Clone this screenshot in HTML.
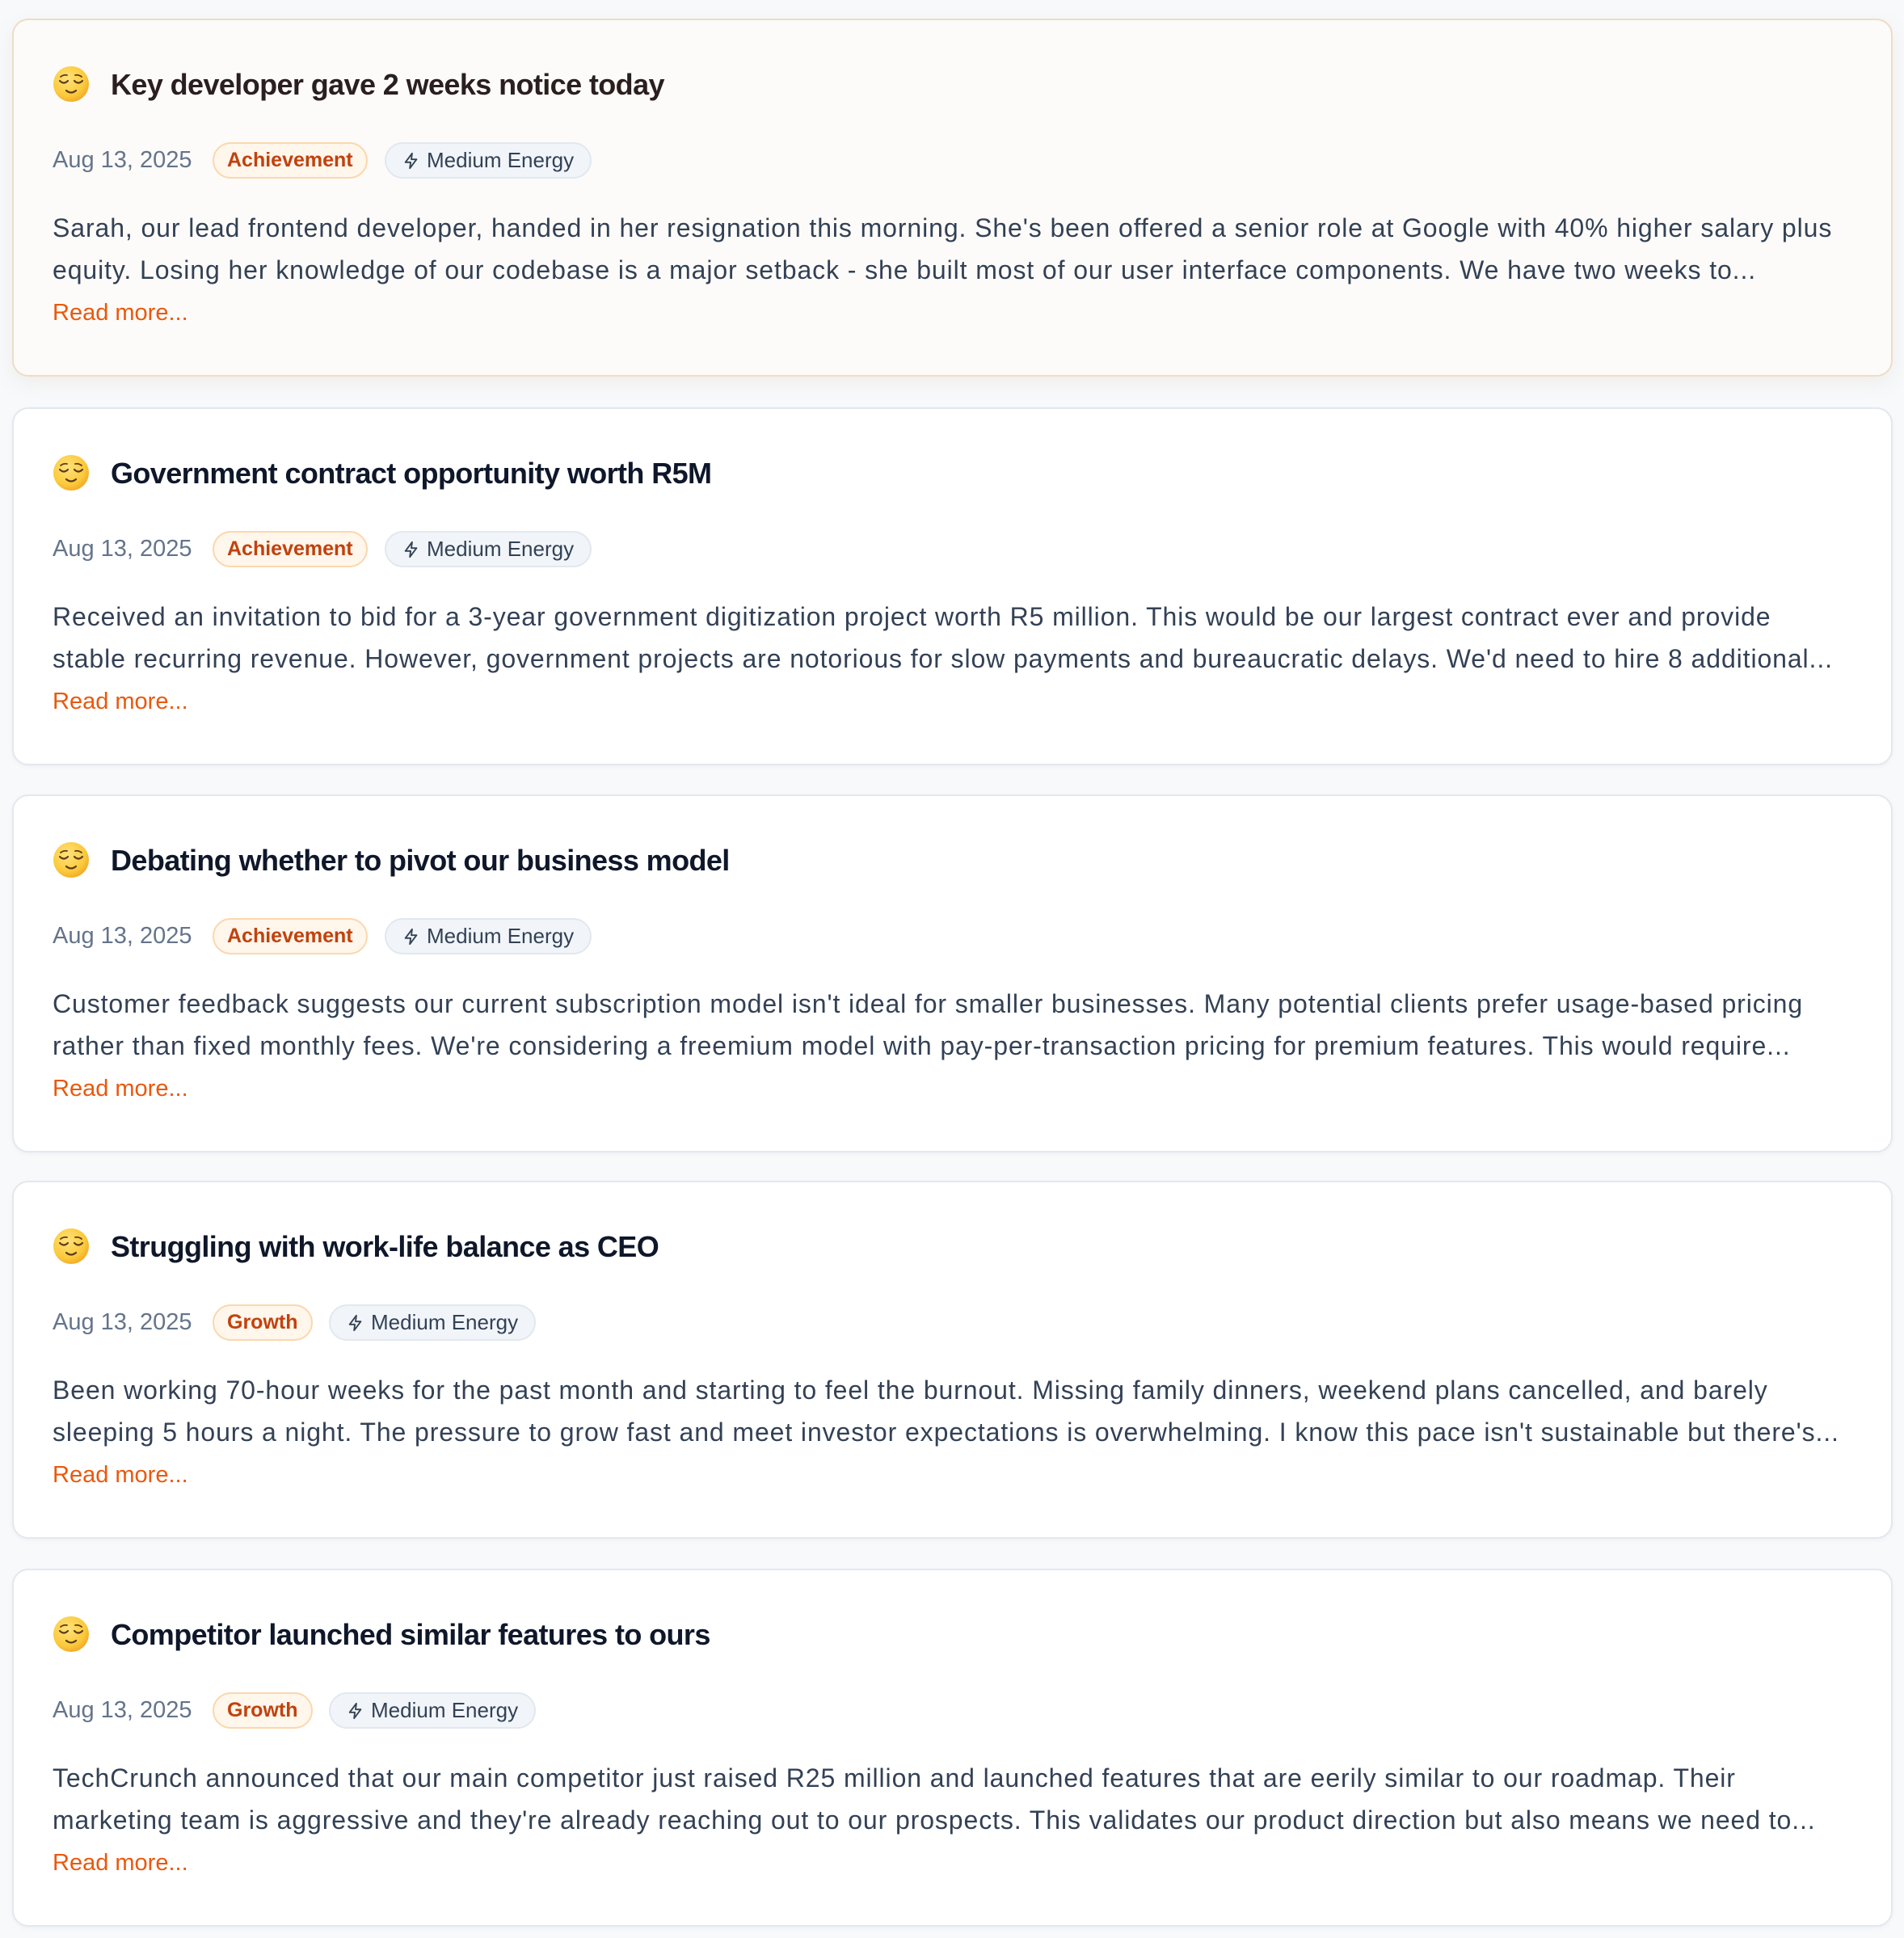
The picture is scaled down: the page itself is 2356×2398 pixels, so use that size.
<!DOCTYPE html>
<html><head><meta charset="utf-8"><style>
*{margin:0;padding:0;box-sizing:border-box}
body{width:2356px;height:2398px;background:#f7f9fb;font-family:"Liberation Sans",sans-serif;position:relative;overflow:hidden}
.card{position:absolute;left:15px;width:2327px;height:443px;background:#fff;border:2px solid #e3e8ef;border-radius:20px;box-shadow:0 2px 6px rgba(15,23,42,.04)}
.card.hl{background:#fcfbf9;border-color:#efdcc4;box-shadow:0 8px 24px rgba(180,140,90,.10)}
.emo{position:absolute;left:48px;top:56px;width:46px;height:46px}
.title{position:absolute;left:120px;top:58px;font-size:36px;font-weight:bold;color:#0f172a;letter-spacing:-0.6px;white-space:nowrap;line-height:44px}
.hl .title{color:#2a1f1f}
.date{position:absolute;left:48px;top:155px;font-size:29px;color:#64748b;line-height:36px;white-space:nowrap}
.pill{position:absolute;top:151px;height:45px;border-radius:24px;font-size:25px;line-height:41px;white-space:nowrap;padding:0 16px}
.cat{background:#fff6ec;border:2px solid #fbd8ad;color:#c2410c;font-weight:bold}
.en{background:#f1f5f9;border:2px solid #e2e8f0;color:#334155;padding-left:50px;font-size:26px;padding-right:20px}
.en svg{position:absolute;left:20px;top:10px}
.body{position:absolute;left:48px;top:231px;font-size:32px;letter-spacing:0.9px;line-height:52px;color:#334155;white-space:nowrap}
.more{position:absolute;left:48px;top:344px;font-size:29px;color:#ea580c;line-height:36px}
</style></head><body>

<svg width="0" height="0" style="position:absolute"><defs>
<symbol id="face" viewBox="0 0 46 46"><defs><radialGradient id="g" cx="40%" cy="35%" r="70%"><stop offset="0" stop-color="#ffe27a"/><stop offset="0.7" stop-color="#fbc93a"/><stop offset="1" stop-color="#f2a623"/></radialGradient></defs><circle cx="23" cy="23" r="22" fill="url(#g)"/><path d="M9 19q5 5 10 0M27 19q5 5 10 0" stroke="#5b3a1a" stroke-width="2.2" fill="none" stroke-linecap="round"/><path d="M10 14q4-3 8-2M36 14q-4-3-8-2" stroke="#5b3a1a" stroke-width="1.8" fill="none" stroke-linecap="round"/><path d="M17 31q6 5 12 0" stroke="#5b3a1a" stroke-width="2.2" fill="none" stroke-linecap="round"/></symbol>
<symbol id="bolt" viewBox="0 0 24 24"><path d="M13 2L4 14h7l-1 8 9-12h-7z" fill="none" stroke="#334155" stroke-width="2" stroke-linejoin="round"/></symbol>
</defs></svg>

<div class="card hl" style="top:23px">
<svg class="emo"><use href="#face"/></svg>
<div class="title">Key developer gave 2 weeks notice today</div>
<div class="date">Aug 13, 2025</div>
<div class="pill cat" style="left:246px">Achievement</div>
<div class="pill en" style="left:459px"><svg width="22" height="22"><use href="#bolt"/></svg>Medium Energy</div>
<div class="body">Sarah, our lead frontend developer, handed in her resignation this morning. She's been offered a senior role at Google with 40% higher salary plus<br>equity. Losing her knowledge of our codebase is a major setback - she built most of our user interface components. We have two weeks to...</div>
<div class="more">Read more...</div>
</div>

<div class="card" style="top:504px">
<svg class="emo"><use href="#face"/></svg>
<div class="title">Government contract opportunity worth R5M</div>
<div class="date">Aug 13, 2025</div>
<div class="pill cat" style="left:246px">Achievement</div>
<div class="pill en" style="left:459px"><svg width="22" height="22"><use href="#bolt"/></svg>Medium Energy</div>
<div class="body">Received an invitation to bid for a 3-year government digitization project worth R5 million. This would be our largest contract ever and provide<br>stable recurring revenue. However, government projects are notorious for slow payments and bureaucratic delays. We'd need to hire 8 additional...</div>
<div class="more">Read more...</div>
</div>

<div class="card" style="top:983px">
<svg class="emo"><use href="#face"/></svg>
<div class="title">Debating whether to pivot our business model</div>
<div class="date">Aug 13, 2025</div>
<div class="pill cat" style="left:246px">Achievement</div>
<div class="pill en" style="left:459px"><svg width="22" height="22"><use href="#bolt"/></svg>Medium Energy</div>
<div class="body">Customer feedback suggests our current subscription model isn't ideal for smaller businesses. Many potential clients prefer usage-based pricing<br>rather than fixed monthly fees. We're considering a freemium model with pay-per-transaction pricing for premium features. This would require...</div>
<div class="more">Read more...</div>
</div>

<div class="card" style="top:1461px">
<svg class="emo"><use href="#face"/></svg>
<div class="title">Struggling with work-life balance as CEO</div>
<div class="date">Aug 13, 2025</div>
<div class="pill cat" style="left:246px">Growth</div>
<div class="pill en" style="left:390px"><svg width="22" height="22"><use href="#bolt"/></svg>Medium Energy</div>
<div class="body">Been working 70-hour weeks for the past month and starting to feel the burnout. Missing family dinners, weekend plans cancelled, and barely<br>sleeping 5 hours a night. The pressure to grow fast and meet investor expectations is overwhelming. I know this pace isn't sustainable but there's...</div>
<div class="more">Read more...</div>
</div>

<div class="card" style="top:1941px">
<svg class="emo"><use href="#face"/></svg>
<div class="title">Competitor launched similar features to ours</div>
<div class="date">Aug 13, 2025</div>
<div class="pill cat" style="left:246px">Growth</div>
<div class="pill en" style="left:390px"><svg width="22" height="22"><use href="#bolt"/></svg>Medium Energy</div>
<div class="body">TechCrunch announced that our main competitor just raised R25 million and launched features that are eerily similar to our roadmap. Their<br>marketing team is aggressive and they're already reaching out to our prospects. This validates our product direction but also means we need to...</div>
<div class="more">Read more...</div>
</div>

</body></html>
